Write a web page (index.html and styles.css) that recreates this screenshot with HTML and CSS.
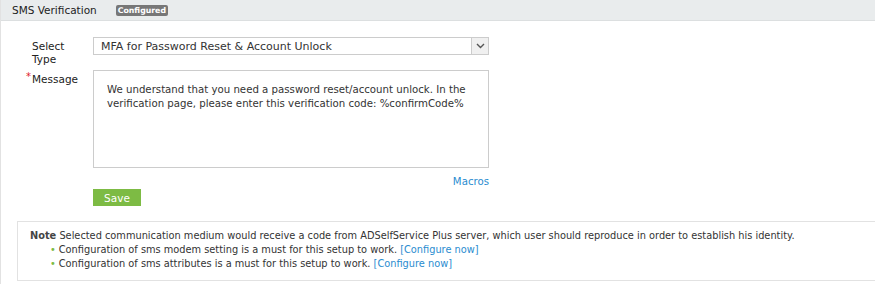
FILE: index.html
```html
<!DOCTYPE html>
<html>
<head>
    <meta charset="utf-8">
    <title>SMS Verification</title>
    <link rel="stylesheet" href="styles.css">
</head>
<body>
    <div class="page">
        <div class="header">
            <span class="title">SMS Verification</span>
            <span class="badge">Configured</span>
        </div>

        <div class="form">
            <div class="row">
                <label class="label">Select<br>Type</label>
                <div class="select">
                    <span class="select-text">MFA for Password Reset &amp; Account Unlock</span>
                    <span class="select-arrow">
                        <svg width="9" height="6" viewBox="0 0 9 6"><path d="M1 1 L4.5 4.5 L8 1" fill="none" stroke="#555" stroke-width="1.4"/></svg>
                    </span>
                </div>
            </div>

            <div class="row msg-row">
                <label class="label"><span class="req">*</span>Message</label>
                <div class="field">
                    <div class="textarea">We understand that you need a password reset/account unlock. In the verification page, please enter this verification code: %confirmCode%</div>
                    <div class="macros"><a href="#">Macros</a></div>
                    <button class="save">Save</button>
                </div>
            </div>
        </div>

        <div class="note">
            <div class="note-line"><b class="note-title">Note</b> Selected communication medium would receive a code from ADSelfService Plus server, which user should reproduce in order to establish his identity.</div>
            <ul>
                <li>Configuration of sms modem setting is a must for this setup to work. <a href="#">[Configure now]</a></li>
                <li>Configuration of sms attributes is a must for this setup to work. <a href="#">[Configure now]</a></li>
            </ul>
        </div>
    </div>
</body>
</html>
```

FILE: styles.css
```css
body {
    margin: 0;
    font-family: "DejaVu Sans", Verdana, sans-serif;
    font-size: 10.2px;
    color: #333;
    background: #fff;
}

.page {
    border-left: 1px solid #e2e2e2;
    height: 284px;
    box-sizing: border-box;
    overflow: hidden;
}

.header {
    height: 20px;
    background-color: #e9eced;
    border-bottom: 1px solid #dcdfe0;
    display: flex;
    align-items: center;
    padding-left: 11px;
}

.title {
    color: #222;
    font-size: 10.5px;
}

.badge {
    margin-left: 19px;
    background-color: #777;
    color: #fff;
    font-size: 7.8px;
    font-weight: bold;
    padding: 1px 2px;
    border-radius: 2px;
    line-height: 9px;
}

.form {
    padding: 16px 0 0 31px;
}

.row {
    display: flex;
}

.label {
    width: 61px;
    line-height: 13px;
    padding-top: 3px;
    color: #222;
    position: relative;
    font-size: 10.5px;
}

.req {
    color: #e0202a;
    position: absolute;
    left: -6px;
    top: 0;
    font-size: 10px;
}

.select {
    width: 394px;
    height: 16px;
    border: 1px solid #ccc;
    display: flex;
    align-items: center;
}

.select-text {
    flex: 1;
    padding-left: 7px;
    font-size: 11px;
}

.select-arrow {
    width: 16px;
    height: 16px;
    background-color: #f0f0f0;
    border-left: 1px solid #ccc;
    display: flex;
    align-items: center;
    justify-content: center;
}

.msg-row {
    margin-top: 4px;
}

.field {
    width: 396px;
}

.textarea {
    height: 72px;
    border: 1px solid #ccc;
    padding: 12px 14px 12px 13px;
    line-height: 14px;
}

.macros {
    text-align: right;
    margin-top: 7px;
    line-height: 13px;
}

.macros a {
    color: #2a8cd0;
    text-decoration: none;
}

.save {
    margin-top: 1px;
    width: 48px;
    height: 17px;
    border: none;
    background-color: #7dbb44;
    color: #fff;
    font-family: "DejaVu Sans", Verdana, sans-serif;
    font-size: 10.5px;
    padding: 0;
}

.note {
    margin: 15px 0 0 16px;
    border: 1px solid #e2e2e2;
    border-right: none;
    height: 51px;
    padding: 7px 12px 0 12px;
    line-height: 14px;
    font-size: 9.8px;
}

.note-title {
    color: #444;
}

.note ul {
    margin: 0;
    padding-left: 29px;
    list-style: none;
}

.note li::before {
    content: "\2022";
    color: #7dbb44;
    margin-left: -9px;
    margin-right: 3px;
}

.note a {
    color: #2a8cd0;
    text-decoration: none;
}
```
